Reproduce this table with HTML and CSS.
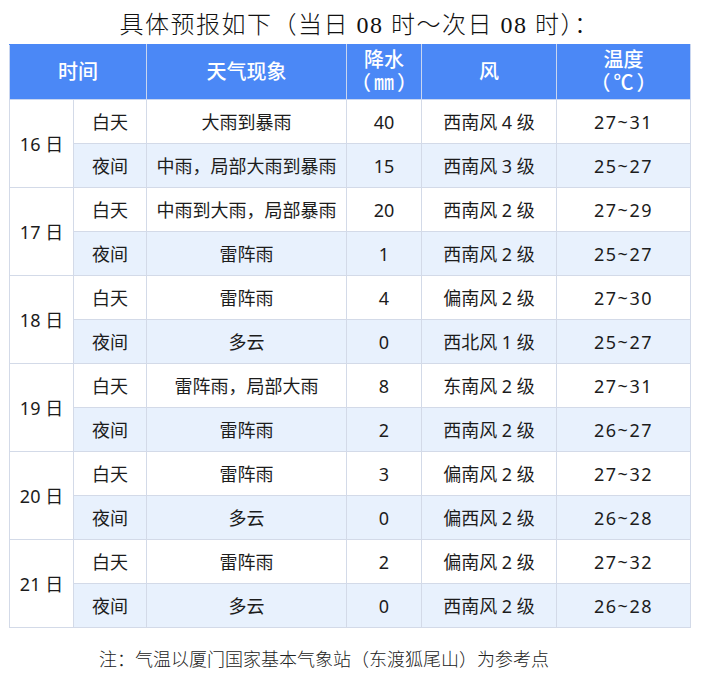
FILE: index.html
```html
<!DOCTYPE html>
<html lang="zh-CN">
<head>
<meta charset="utf-8">
<title>具体预报</title>
<link rel="stylesheet" href="styles.css">
</head>
<body>
<div class="page">
  <h1 class="title">具体预报如下（当日 08 时～次日 08 时）：</h1>
  <table class="forecast">
    <colgroup>
      <col class="c-date"><col class="c-period"><col class="c-weather"><col class="c-rain"><col class="c-wind"><col class="c-temp">
    </colgroup>
    <thead>
      <tr>
        <th colspan="2">时间</th>
        <th>天气现象</th>
        <th>降水<br><span class="unit">（㎜）</span></th>
        <th>风</th>
        <th>温度<br><span class="unit">（℃）</span></th>
      </tr>
    </thead>
    <tbody>
      <tr><td rowspan="2" class="date">16 日</td><td>白天</td><td>大雨到暴雨</td><td>40</td><td>西南风 4 级</td><td class="temp">27~31</td></tr>
      <tr class="night"><td>夜间</td><td>中雨，局部大雨到暴雨</td><td>15</td><td>西南风 3 级</td><td class="temp">25~27</td></tr>
      <tr><td rowspan="2" class="date">17 日</td><td>白天</td><td>中雨到大雨，局部暴雨</td><td>20</td><td>西南风 2 级</td><td class="temp">27~29</td></tr>
      <tr class="night"><td>夜间</td><td>雷阵雨</td><td>1</td><td>西南风 2 级</td><td class="temp">25~27</td></tr>
      <tr><td rowspan="2" class="date">18 日</td><td>白天</td><td>雷阵雨</td><td>4</td><td>偏南风 2 级</td><td class="temp">27~30</td></tr>
      <tr class="night"><td>夜间</td><td>多云</td><td>0</td><td>西北风 1 级</td><td class="temp">25~27</td></tr>
      <tr><td rowspan="2" class="date">19 日</td><td>白天</td><td>雷阵雨，局部大雨</td><td>8</td><td>东南风 2 级</td><td class="temp">27~31</td></tr>
      <tr class="night"><td>夜间</td><td>雷阵雨</td><td>2</td><td>西南风 2 级</td><td class="temp">26~27</td></tr>
      <tr><td rowspan="2" class="date">20 日</td><td>白天</td><td>雷阵雨</td><td>3</td><td>偏南风 2 级</td><td class="temp">27~32</td></tr>
      <tr class="night"><td>夜间</td><td>多云</td><td>0</td><td>偏西风 2 级</td><td class="temp">26~28</td></tr>
      <tr><td rowspan="2" class="date">21 日</td><td>白天</td><td>雷阵雨</td><td>2</td><td>偏南风 2 级</td><td class="temp">27~32</td></tr>
      <tr class="night"><td>夜间</td><td>多云</td><td>0</td><td>西南风 2 级</td><td class="temp">26~28</td></tr>
    </tbody>
  </table>
  <p class="note">注：气温以厦门国家基本气象站（东渡狐尾山）为参考点</p>
</div>
</body>
</html>
```

FILE: styles.css
```css
html, body {
  margin: 0;
  padding: 0;
  background: #ffffff;
}

.page {
  width: 701px;
  font-family: "Noto Sans", "Noto Sans CJK SC", sans-serif;
  color: #1c1c1c;
}

.title {
  margin: 0;
  height: 44px;
  box-sizing: border-box;
  padding: 13px 0 0 18px;
  font-family: "Liberation Serif", "Noto Sans CJK SC", serif;
  font-size: 24px;
  line-height: 24px;
  font-weight: 300;
  text-align: center;
  color: #111;
  letter-spacing: 1.5px;
}

.forecast {
  margin-left: 9px;
  border-collapse: collapse;
  table-layout: fixed;
  width: 681px;
  font-size: 18px;
}

.c-date { width: 64px; }
.c-period { width: 73px; }
.c-weather { width: 200px; }
.c-rain { width: 75px; }
.c-wind { width: 135px; }
.c-temp { width: 134px; }

.forecast th,
.forecast td {
  border: 1px solid #d3dae8;
  text-align: center;
  vertical-align: middle;
  padding: 0;
}

.forecast th {
  background: #4b88f6;
  color: #ffffff;
  font-family: "Liberation Serif", "Noto Sans CJK SC", serif;
  font-weight: 500;
  font-size: 20px;
  line-height: 23px;
  height: 54px;
  border-color: #c9d6f0;
  border-top-color: #4b88f6;
}

.forecast th .unit {
  letter-spacing: 3px;
  padding-left: 3px;
}

.forecast tbody tr {
  height: 44px;
}

.forecast td {
  line-height: 20px;
}

.forecast td.temp {
  letter-spacing: 1.5px;
}

.forecast tr.night td {
  background: #e8f1fd;
}

.forecast td.date {
  background: #ffffff;
}

.note {
  margin: 22px 0 0 99px;
  font-family: "Liberation Serif", "Noto Sans CJK SC", serif;
  font-size: 18px;
  line-height: 20px;
  font-weight: 300;
  color: #222;
}
```
